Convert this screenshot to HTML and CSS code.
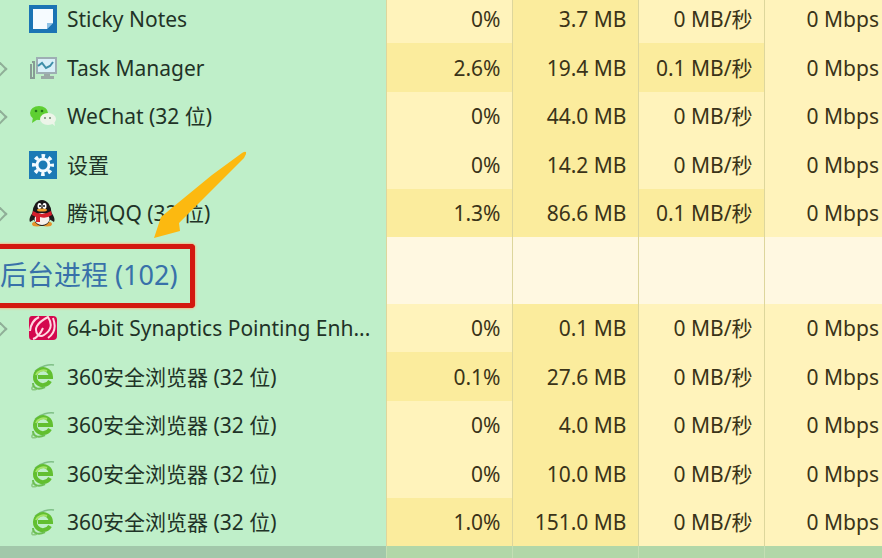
FILE: index.html
```
<!DOCTYPE html>
<html lang="zh-CN">
<head>
<meta charset="utf-8">
<title>任务管理器</title>
<link rel="stylesheet" href="styles.css">
</head>
<body>
<svg class="defs" aria-hidden="true">
  <symbol id="browser" viewBox="0 0 28 28">
    <path d="M5 22C1 26 3 28 8 26" fill="none" stroke="#8bc980" stroke-width="1.5"/>
    <path d="M6 8C12 3 20 1 25 2" fill="none" stroke="#7fbf86" stroke-width="1.5"/>
    <path d="M21 18A8 8 0 1 1 22 14H9" fill="none" stroke="#62bf30" stroke-width="4"/>
    <path d="M7 12A8 7 0 0 1 18 8" fill="none" stroke="#a6e468" stroke-width="2"/>
    <path d="M4 20C4 26 10 27 16 24" fill="none" stroke="#6cbf52" stroke-width="2"/>
  </symbol>
</svg>
<main class="manager">
<table class="processes">
  <colgroup><col><col class="metric"><col class="metric"><col class="metric"><col class="network"></colgroup>
  <tbody>
    <tr><th scope="row"><div class="name"><span class="chevron"></span><svg class="icon" viewBox="0 0 28 28"><path fill="#1b74b4" d="M0 0h28v28H0z"/><path fill="#f6fbff" d="M4 4h20v14l-6 6H4z"/><path fill="#1b74b4" d="M24 18v6h-6z"/><path fill="#8fc2e6" d="M18 18h6l-6 6z"/></svg><span>Sticky Notes</span></div></th><td>0%</td><td>3.7 MB</td><td>0 MB/秒</td><td>0 Mbps</td></tr>
    <tr><th scope="row"><div class="name"><span class="chevron on"></span><svg class="icon" viewBox="0 0 28 28"><path d="M2 10v14h3V8H3" fill="none" stroke="#889b95" stroke-width="2"/><path d="M8 4h19v15H8z" fill="#d9f0f8" stroke="#9eaeb4" stroke-width="2"/><path d="M9 12l4-3 4 5 4-2 3-4" fill="none" stroke="#3e8fa8" stroke-width="2"/><path d="M15 20h6v2h4v3H12v-3h3z" fill="#9aa9a5"/></svg><span>Task Manager</span></div></th><td class="warm">2.6%</td><td>19.4 MB</td><td class="warm">0.1 MB/秒</td><td>0 Mbps</td></tr>
    <tr><th scope="row"><div class="name"><span class="chevron on"></span><svg class="icon" viewBox="0 0 28 28"><ellipse cx="10" cy="11" rx="9" ry="7" fill="#5ecf32"/><path d="M4 15l-1 6 6-4z" fill="#5ecf32"/><circle cx="7" cy="9" r="1.3" fill="#24791a"/><circle cx="13" cy="9" r="1.3" fill="#24791a"/><ellipse cx="19" cy="17" rx="8" ry="6" fill="#edf5e9"/><path d="M22 21l4 3-1-6z" fill="#edf5e9"/><circle cx="16" cy="16" r="1" fill="#708870"/><circle cx="21" cy="16" r="1" fill="#708870"/></svg><span>WeChat (32 位)</span></div></th><td>0%</td><td>44.0 MB</td><td>0 MB/秒</td><td>0 Mbps</td></tr>
    <tr><th scope="row"><div class="name"><span class="chevron"></span><svg class="icon" viewBox="0 0 28 28"><path fill="#1b7ab5" d="M0 0h28v28H0z"/><circle cx="14" cy="14" r="6" fill="none" stroke="#f4fbff" stroke-width="3"/><circle cx="14" cy="14" r="9" fill="none" stroke="#f4fbff" stroke-width="4" stroke-dasharray="3.5 3.57" stroke-dashoffset="1.75"/></svg><span>设置</span></div></th><td>0%</td><td>14.2 MB</td><td>0 MB/秒</td><td>0 Mbps</td></tr>
    <tr><th scope="row"><div class="name"><span class="chevron on"></span><svg class="icon" viewBox="0 0 28 28"><path d="M5 12Q-1 19 1 23L6 20zM21 12Q27 19 25 23L20 20z" fill="#201c1c"/><ellipse cx="8" cy="25" rx="5" ry="2.5" fill="#e6932c"/><ellipse cx="18" cy="25" rx="5" ry="2.5" fill="#e6932c"/><ellipse cx="13" cy="14" rx="9.5" ry="13" fill="#1a1718"/><ellipse cx="13" cy="20" rx="7.5" ry="6" fill="#f6f1ed"/><ellipse cx="10.5" cy="7" rx="2" ry="3" fill="#fff"/><ellipse cx="15.5" cy="7" rx="2" ry="3" fill="#fff"/><circle cx="11" cy="7" r="1" fill="#111"/><circle cx="15" cy="7" r="1" fill="#111"/><ellipse cx="13" cy="11" rx="5" ry="1.5" fill="#f0a02c"/><path d="M4 12Q13 18 22 12L23 16Q17 20 11 18V23H7V18L3 16z" fill="#d61f2c"/></svg><span>腾讯QQ (32 位)</span></div></th><td class="warm">1.3%</td><td>86.6 MB</td><td class="warm">0.1 MB/秒</td><td>0 Mbps</td></tr>
    <tr class="group"><th scope="rowgroup"><div class="group-title"><span>后台进程 (102)</span><svg class="arrow" viewBox="0 0 96 92" aria-hidden="true"><path d="M2 88L9 67L21 57L60 25L90 3Q95 0 94 4L92 8L38 62L27 73L28 81Z" fill="#fcb910"/></svg></div></th><td></td><td></td><td></td><td></td></tr>
    <tr><th scope="row"><div class="name"><span class="chevron on"></span><svg class="icon" viewBox="0 0 28 28"><path d="M3 2h21q4 0 4 4v16q0 4-4 4H3q-3 0-3-4V6q0-4 3-4z" fill="#d4084e"/><path d="M9 21Q2 12 19 3Q26 14 15 21Q12 23 9 21M4 25Q10 23 14 14M1 17Q2 7 10 3M24 4Q29 17 19 24" fill="none" stroke="#ffd9e2" stroke-width="2"/></svg><span>64-bit Synaptics Pointing Enh...</span></div></th><td>0%</td><td>0.1 MB</td><td>0 MB/秒</td><td>0 Mbps</td></tr>
    <tr><th scope="row"><div class="name"><span class="chevron"></span><svg class="icon"><use href="#browser"/></svg><span>360安全浏览器 (32 位)</span></div></th><td class="warm">0.1%</td><td>27.6 MB</td><td>0 MB/秒</td><td>0 Mbps</td></tr>
    <tr><th scope="row"><div class="name"><span class="chevron"></span><svg class="icon"><use href="#browser"/></svg><span>360安全浏览器 (32 位)</span></div></th><td>0%</td><td>4.0 MB</td><td>0 MB/秒</td><td>0 Mbps</td></tr>
    <tr><th scope="row"><div class="name"><span class="chevron"></span><svg class="icon"><use href="#browser"/></svg><span>360安全浏览器 (32 位)</span></div></th><td>0%</td><td>10.0 MB</td><td>0 MB/秒</td><td>0 Mbps</td></tr>
    <tr><th scope="row"><div class="name"><span class="chevron"></span><svg class="icon"><use href="#browser"/></svg><span>360安全浏览器 (32 位)</span></div></th><td class="warm">1.0%</td><td>151.0 MB</td><td>0 MB/秒</td><td>0 Mbps</td></tr>
    <tr class="selected"><th scope="row"><div class="name"><span class="chevron"></span><svg class="icon"><use href="#browser"/></svg></div></th><td></td><td></td><td></td><td></td></tr>
  </tbody>
</table>
</main>
</body>
</html>
```
FILE: styles.css
```
* { box-sizing: border-box; }
body {
  margin: 0;
  background: #bfefc9;
  color: #1f3327;
  font: 21px/28px "Noto Sans", "Noto Sans CJK SC", sans-serif;
}
.defs { display: none; }
.manager { height: 100vh; overflow: hidden; }
.processes {
  width: 100%;
  margin-top: -5px;
  table-layout: fixed;
  border-collapse: collapse;
}
.metric { width: 126px; }
.network { width: 118px; }
th, td { padding: 0; font-weight: 400; white-space: nowrap; }
tr { height: 48px; }
tr:nth-child(even) { height: 49px; }
th { text-align: left; }
td {
  padding-right: 11px;
  border-left: 1px solid #ddd69c;
  background: #fff3bb;
  color: #3a3318;
  text-align: right;
}
td:nth-child(3), td.warm { background: #fbec9d; }
td:last-child { padding-right: 3px; }
.name { display: flex; align-items: center; }
.chevron { width: 29px; height: 20px; overflow: hidden; }
.chevron.on::before {
  content: "";
  display: block;
  width: 10px;
  height: 10px;
  margin: 5px 0 0 -7px;
  border: solid #8fae97;
  border-width: 2px 2px 0 0;
  transform: rotate(45deg);
}
.icon { width: 28px; height: 28px; margin-right: 10px; }
.group, tr.group:nth-child(even) { height: 67px; }
.group th { vertical-align: top; }
.group td, .group td:nth-child(3) { background: #fff8e1; }
.group-title {
  position: relative;
  width: 195px;
  height: 64px;
  margin: 7px 0 -4px;
  border: solid #d3180f;
  border-width: 5px 5px 5px 0;
  border-radius: 0 4px 4px 0;
  box-shadow: 0 0 2px 1px #f3ba8c;
  color: #3871a9;
  font-size: 27px;
  line-height: 52px;
}
.arrow {
  position: absolute;
  left: 152px;
  top: -99px;
  width: 96px;
  height: 92px;
}
.selected th { background: #a2c8aa; }
.selected td, .selected td:nth-child(3) { border-color: #c4dfb4; background: #b2d7a8; }
```
